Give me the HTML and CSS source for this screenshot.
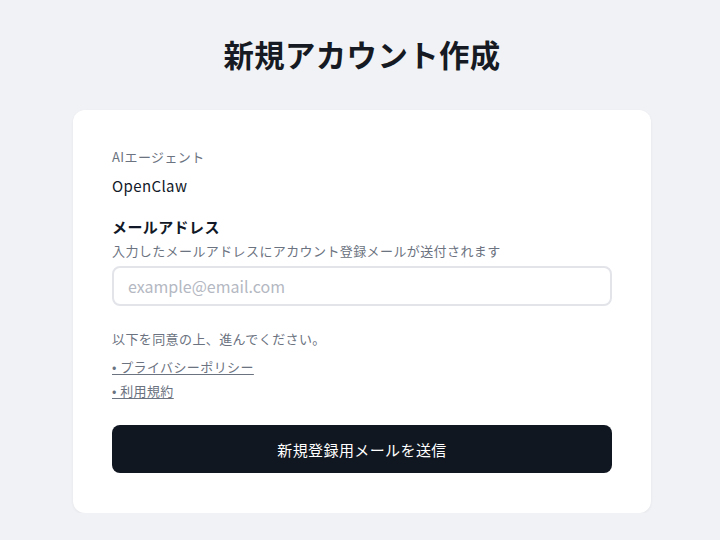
FILE: index.html
```html
<!DOCTYPE html>
<html lang="ja">
<head>
    <meta charset="UTF-8">
    <meta name="viewport" content="width=device-width, initial-scale=1.0">
    <title>新規アカウント作成</title>
    <link rel="stylesheet" href="styles.css">
</head>
<body>
    <div class="page">
        <h1 class="title">新規アカウント作成</h1>
        <div class="card">
            <div class="label-small">AIエージェント</div>
            <div class="agent">OpenClaw</div>

            <div class="field">
                <div class="field-label">メールアドレス</div>
                <div class="field-help">入力したメールアドレスにアカウント登録メールが送付されます</div>
                <input class="input" type="email" placeholder="example@email.com">
            </div>

            <p class="agree">以下を同意の上、進んでください。</p>
            <ul class="links">
                <li><a href="#">• プライバシーポリシー</a></li>
                <li><a href="#">• 利用規約</a></li>
            </ul>

            <button class="submit">新規登録用メールを送信</button>
        </div>
    </div>
</body>
</html>
```

FILE: styles.css
```css
* {
    box-sizing: border-box;
}

body {
    margin: 0;
    background: #f1f2f6;
    font-family: "Noto Sans CJK JP", "Noto Sans", sans-serif;
    color: #111827;
    letter-spacing: 0.025em;
}

.page {
    display: flex;
    flex-direction: column;
    align-items: center;
    padding: 32px 0 0 4px;
}

.title {
    margin: 0;
    font-size: 30.4px;
    line-height: 44px;
    font-weight: 700;
    color: #161a22;
}

.card {
    margin-top: 34px;
    width: 578px;
    background: #fff;
    border-radius: 12px;
    padding: 37px 39px 40px;
    box-shadow: 0 1px 3px rgba(0, 0, 0, 0.06);
}

.label-small {
    font-size: 13px;
    line-height: 20px;
    color: #6b7280;
}

.agent {
    margin-top: 8px;
    font-size: 15px;
    line-height: 22px;
}

.field {
    margin-top: 19px;
}

.field-label {
    font-size: 15px;
    line-height: 22px;
    font-weight: 700;
}

.field-help {
    margin-top: 3px;
    font-size: 13px;
    line-height: 20px;
    color: #6b7280;
}

.input {
    display: block;
    width: 100%;
    height: 40px;
    margin-top: 5px;
    padding: 0 14px;
    border: 2px solid #e2e4ea;
    border-radius: 8px;
    font-family: inherit;
    font-size: 16px;
    letter-spacing: 0;
    color: #111827;
    outline: none;
}

.input::placeholder {
    color: #b4b8c2;
}

.agree {
    margin: 23px 0 0;
    font-size: 13px;
    line-height: 20px;
    color: #6b7280;
}

.links {
    list-style: none;
    margin: 4px 0 0;
    padding: 0;
    display: flex;
    flex-direction: column;
    gap: 0;
}

.links a {
    font-size: 13px;
    line-height: 20px;
    color: #6b7280;
    text-decoration: underline;
    text-underline-offset: 2px;
}

.submit {
    display: block;
    width: 100%;
    height: 48px;
    margin-top: 24px;
    border: none;
    border-radius: 8px;
    background: #111721;
    color: #fff;
    font-family: inherit;
    font-size: 15px;
    letter-spacing: inherit;
}
```
